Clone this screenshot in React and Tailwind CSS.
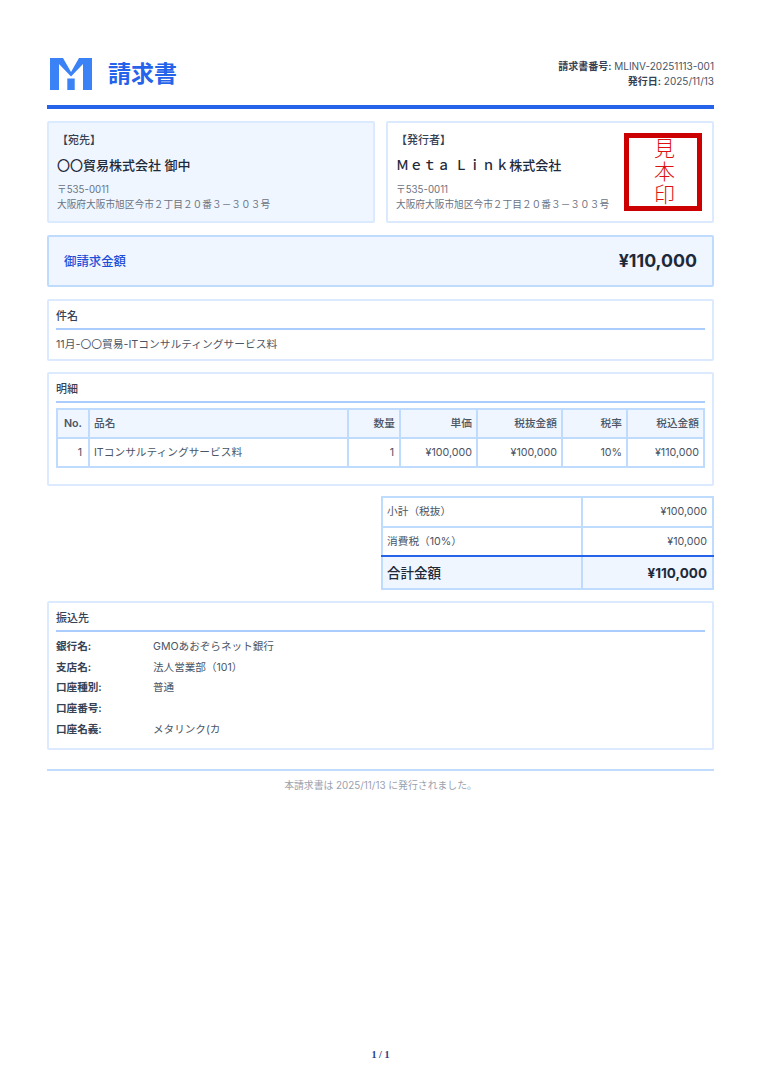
const items = [
  { no: 1, name: "ITコンサルティングサービス料", qty: 1, price: "¥100,000", net: "¥100,000", rate: "10%", total: "¥110,000" },
];

const bank = [
  ["銀行名:", "GMOあおぞらネット銀行"],
  ["支店名:", "法人営業部（101）"],
  ["口座種別:", "普通"],
  ["口座番号:", ""],
  ["口座名義:", "メタリンク(カ"],
];

const Logo = () => (
  <svg width="42" height="32" viewBox="0 0 42 32" className="ml-[3px] block">
    <path fill="#3b82f6" d="M0 0H13L21 14L29 0H42V32H33V6L21 18.5L9 6V32H0Z" />
    <rect x="17.3" y="20.5" width="7.4" height="11.5" fill="#3b82f6" />
  </svg>
);

const Section = ({ title, className, children }) => (
  <section className={`rounded-[2px] border-2 border-[#dbeafe] px-[7px] ${className}`}>
    <h2 className="border-b-2 border-[#aacdfd] pb-[4px] pt-[7px] text-[11px] font-medium leading-[16px] text-gray-700">{title}</h2>
    {children}
  </section>
);

const App = () => {
  return (
    <div className="flex min-h-[1080px] flex-col bg-white px-[47px] font-['Inter','Noto_Sans_CJK_JP',sans-serif] text-gray-600">
      {/* Header */}
      <header className="flex h-[109px] items-start justify-between border-b-4 border-[#2563eb] pt-[58px]">
        <div className="flex items-center gap-4">
          <Logo />
          <h1 className="text-[23px] font-bold leading-[32px] text-[#2563eb]">請求書</h1>
        </div>
        <div className="mt-[1px] text-right text-[10px] leading-[15px] text-gray-600">
          <p><span className="font-semibold text-gray-700">請求書番号:</span> MLINV-20251113-001</p>
          <p><span className="font-semibold text-gray-700">発行日:</span> 2025/11/13</p>
        </div>
      </header>

      {/* Parties */}
      <div className="mt-[12px] grid h-[102px] grid-cols-2 gap-[11px]">
        <div className="rounded-[2px] border-2 border-[#dbeafe] bg-[#eff6ff] px-[8px] pt-[9px]">
          <p className="text-[11px] font-medium leading-[16px] text-gray-700">【宛先】</p>
          <p className="mt-[8px] text-[13px] font-medium leading-[18px] text-gray-800">〇〇貿易株式会社 御中</p>
          <p className="mt-[8px] text-[9.7px] leading-[15px] text-gray-500">〒535-0011<br />大阪府大阪市旭区今市２丁目２０番３－３０３号</p>
        </div>
        <div className="relative rounded-[2px] border-2 border-[#dbeafe] bg-white px-[8px] pt-[9px]">
          <p className="text-[11px] font-medium leading-[16px] text-gray-700">【発行者】</p>
          <p className="mt-[8px] text-[13px] font-medium leading-[18px] text-gray-800"><span className="tracking-[0.65px]">Ｍｅｔａ Ｌｉｎｋ</span>株式会社</p>
          <p className="mt-[8px] text-[9.7px] leading-[15px] text-gray-500">〒535-0011<br />大阪府大阪市旭区今市２丁目２０番３－３０３号</p>
          <div className="absolute left-[236px] top-[10px] flex h-[78px] w-[78px] items-center justify-center whitespace-nowrap border-[5px] border-[#cc0000] text-[21px] font-light leading-none tracking-[2px] text-[#dd1111] [writing-mode:vertical-rl]">
            見本印
          </div>
        </div>
      </div>

      {/* Amount */}
      <div className="mt-[12px] flex h-[52px] items-center justify-between rounded-[2px] border-2 border-[#bfdbfe] bg-[#eff6ff] px-[15px]">
        <span className="pt-[2px] text-[12.4px] font-medium text-[#1d4ed8]">御請求金額</span>
        <span className="text-[17.8px] font-bold text-gray-800">¥110,000</span>
      </div>

      {/* Subject */}
      <Section title="件名" className="mt-[12px] h-[62px]">
        <p className="pt-[7px] text-[10.75px] leading-[16px]">11月-〇〇貿易-ITコンサルティングサービス料</p>
      </Section>

      {/* Details */}
      <Section title="明細" className="mt-[11px] h-[114px]">
        <table className="mt-[5px] w-full table-fixed border-collapse text-[10.7px] leading-[16px]">
          <colgroup>
            <col className="w-[32px]" /><col /><col className="w-[52px]" /><col className="w-[77px]" /><col className="w-[85px]" /><col className="w-[65px]" /><col className="w-[77px]" />
          </colgroup>
          <thead>
            <tr className="h-[29px] bg-[#eff6ff] text-gray-600">
              <th className="border-2 border-[#bfdbfe] text-center font-semibold">No.</th>
              <th className="border-2 border-[#bfdbfe] px-[4px] text-left font-medium">品名</th>
              {["数量", "単価", "税抜金額", "税率", "税込金額"].map((h) => (
                <th key={h} className="border-2 border-[#bfdbfe] px-[4px] text-right font-medium">{h}</th>
              ))}
            </tr>
          </thead>
          <tbody>
            {items.map((it) => (
              <tr key={it.no} className="h-[29px]">
                <td className="border-2 border-[#bfdbfe] px-[6px] text-right">{it.no}</td>
                <td className="border-2 border-[#bfdbfe] px-[4px]">{it.name}</td>
                <td className="border-2 border-[#bfdbfe] px-[5px] text-right">{it.qty}</td>
                <td className="border-2 border-[#bfdbfe] px-[4px] text-right">{it.price}</td>
                <td className="border-2 border-[#bfdbfe] px-[4px] text-right">{it.net}</td>
                <td className="border-2 border-[#bfdbfe] px-[4px] text-right">{it.rate}</td>
                <td className="border-2 border-[#bfdbfe] px-[4px] text-right">{it.total}</td>
              </tr>
            ))}
          </tbody>
        </table>
      </Section>

      {/* Totals */}
      <div className="mt-[10px] flex justify-end">
        <table className="w-[333px] table-fixed border-collapse text-[10.7px] leading-[16px]">
          <colgroup><col className="w-[200px]" /><col /></colgroup>
          <tbody>
            <tr className="h-[30px]">
              <td className="border-2 border-[#bfdbfe] px-[4px]">小計（税抜）</td>
              <td className="border-2 border-[#bfdbfe] px-[5px] text-right">¥100,000</td>
            </tr>
            <tr className="h-[29px]">
              <td className="border-2 border-[#bfdbfe] border-b-[#2563eb] px-[4px]">消費税（10%）</td>
              <td className="border-2 border-[#bfdbfe] border-b-[#2563eb] px-[5px] text-right">¥10,000</td>
            </tr>
            <tr className="h-[33px] bg-[#eff6ff] text-[13.5px] font-bold text-gray-800">
              <td className="border-2 border-[#bfdbfe] border-t-[#2563eb] px-[4px] font-medium">合計金額</td>
              <td className="border-2 border-[#bfdbfe] border-t-[#2563eb] px-[5px] text-right">¥110,000</td>
            </tr>
          </tbody>
        </table>
      </div>

      {/* Bank */}
      <Section title="振込先" className="mt-[11px] h-[149px]">
        <dl className="pt-[4px] text-[10.6px] leading-[21px]">
          {bank.map(([k, v]) => (
            <div key={k} className="flex h-[20.7px]">
              <dt className="w-[97px] font-semibold text-gray-700">{k}</dt>
              <dd>{v}</dd>
            </div>
          ))}
        </dl>
      </Section>

      {/* Footer */}
      <footer className="mt-[19px] border-t-2 border-[#bfdbfe] pt-[6px] text-center text-[9.85px] leading-[16px] text-gray-400">
        本請求書は 2025/11/13 に発行されました。
      </footer>

      <div className="mt-auto pb-[19px] text-center font-['Liberation_Serif',serif] text-[10px] font-bold leading-[12px] text-[#1e3a8a]">1 / 1</div>
    </div>
  );
};

export default App;
